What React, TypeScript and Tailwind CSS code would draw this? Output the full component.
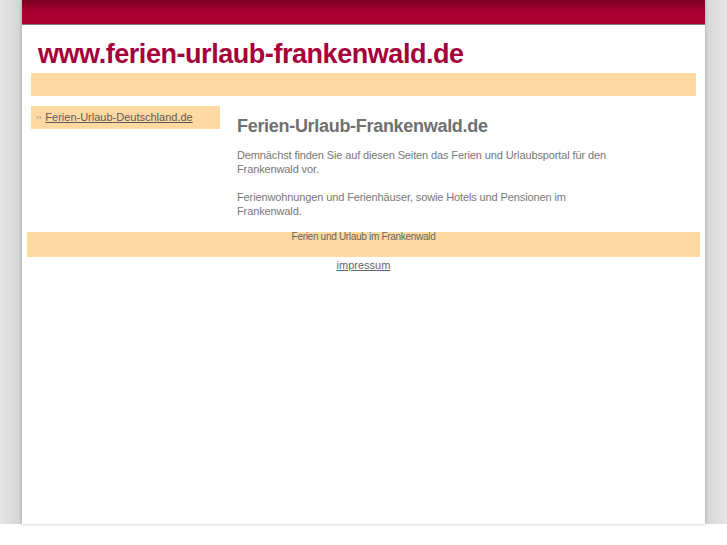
export default function App() {
  return (
    <div className="min-h-[545px] bg-white font-['Liberation_Sans',Arial,sans-serif]">
      <div className="flex h-[524px] justify-center bg-[linear-gradient(to_right,#e6e6e6,#d2d2d2_3%,#d6d6d6_97%,#e6e6e6)]">
        <div className="flex w-[683px] flex-col bg-white shadow-[0_0_3px_rgba(0,0,0,0.25)]">
          <div className="h-[24px] bg-[linear-gradient(to_bottom,#7a0022,#a8002f_45%,#a8002f)]" />
          <div className="h-px bg-[#7c7c86]" />

          <h1 className="mt-[13px] ml-[16px] text-[27px] leading-[32px] font-bold tracking-[-0.45px] text-[#a6003a]">
            www.ferien-urlaub-frankenwald.de
          </h1>

          <div className="mx-[9px] mt-[3px] h-[23px] bg-[#fed9a2]" />

          <div className="mt-[10px] flex">
            <div className="ml-[9px] w-[189px]">
              <div className="flex h-[23px] items-center bg-[#fed9a2] pl-[5px] text-[11px] text-[#5a5a5a]">
                <span className="mr-[4px] text-[8px] text-[#888]">››</span>
                <a href="#" className="underline">Ferien-Urlaub-Deutschland.de</a>
              </div>
            </div>

            <div className="ml-[17px] w-[380px] text-[11px] leading-[14px] tracking-[-0.12px] text-[#777]">
              <h2 className="mt-[9px] text-[18px] leading-[22px] font-bold tracking-[-0.3px] text-[#707070]">
                Ferien-Urlaub-Frankenwald.de
              </h2>
              <p className="mt-[11px]">
                Demnächst finden Sie auf diesen Seiten das Ferien und Urlaubsportal für den Frankenwald vor.
              </p>
              <p className="mt-[14px]">
                Ferienwohnungen und Ferienhäuser, sowie Hotels und Pensionen im Frankenwald.
              </p>
            </div>
          </div>

          <div className="mx-[5px] mt-[14px] h-[25px] bg-[#fed9a2] text-center text-[10px] leading-[10px] tracking-[-0.3px] text-[#666]">
            Ferien und Urlaub im Frankenwald
          </div>

          <div className="text-center text-[11px] text-[#666]">
            <a href="#" className="underline">impressum</a>
          </div>
        </div>
      </div>
    </div>
  );
}
